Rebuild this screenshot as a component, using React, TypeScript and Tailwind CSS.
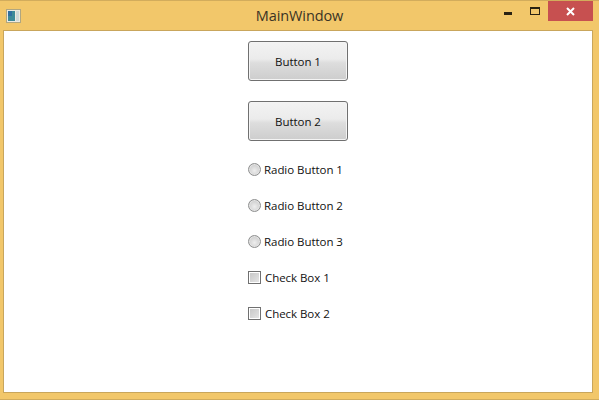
const font = { fontFamily: '"Open Sans", "Noto Sans", sans-serif' };

function Btn({ label }: { label: string }) {
  return (
    <button className="w-[100px] h-[40px] rounded-[3px] border border-[#707070] bg-[linear-gradient(#f3f3f3_0%,#ebebeb_45%,#dddddd_55%,#cdcdcd_100%)] text-[11.5px] tracking-[-0.05px] text-[#111] flex items-center justify-center pt-[2px] shadow-[inset_0_0_0_1px_#f4f4f4]">
      {label}
    </button>
  );
}

function Radio({ label }: { label: string }) {
  return (
    <div className="h-[36px] w-[100px] flex items-center gap-[3px] text-[11.5px] tracking-[-0.05px] text-[#111]">
      <span className="w-[13px] h-[13px] rounded-full border border-[#8e8f8f] bg-[radial-gradient(circle_at_50%_60%,#eeeeee_0%,#d5d5d5_55%,#c4c4c4_100%)] shadow-[inset_0_0_0_1px_#e4e4e4] shrink-0" />
      <span className="pt-[2px]">{label}</span>
    </div>
  );
}

function Check({ label }: { label: string }) {
  return (
    <div className="h-[36px] w-[100px] flex items-center gap-[4px] text-[11.5px] tracking-[-0.05px] text-[#111]">
      <span className="w-[13px] h-[13px] border border-[#707070] bg-white p-[1px] shrink-0 flex">
        <span className="flex-1 bg-[linear-gradient(135deg,#c8c8c8,#e4e4e4)]" />
      </span>
      <span className="pt-[2px]">{label}</span>
    </div>
  );
}

export default function App() {
  return (
    <div style={font} className="w-[599px] h-[400px] bg-[#f2c76a] flex flex-col overflow-hidden border-t border-b border-[#d2ac5c]">
      <div className="h-[29px] grid grid-cols-[1fr_auto_1fr] shrink-0">
        <div className="flex items-center">
          <svg width="16" height="16" viewBox="0 0 16 16" className="ml-[6px]">
            <rect x="0.5" y="1.5" width="14" height="13" fill="#eceae0" stroke="#b0a680" />
            <rect x="2" y="3" width="7" height="10" fill="#3d8a98" />
            <rect x="2" y="3" width="4" height="5" fill="#2f6fa0" />
            <rect x="10" y="3" width="3" height="10" fill="#cfd8d8" />
          </svg>
        </div>
        <div className="flex items-center text-[14.5px] tracking-[-0.1px] text-[#3a3325]">MainWindow</div>
        <div className="flex justify-end items-start h-[20px]">
          <span className="mt-[11px] mr-[18px] w-[8px] h-[3px] bg-[#2a2212]" />
          <span className="mt-[6px] mr-[8px] w-[10px] h-[8px] border border-t-2 border-[#2a2212]" />
          <span className="mr-[6px] w-[45px] h-[20px] bg-[#c75050] flex items-center justify-center">
            <svg width="9" height="9" viewBox="0 0 9 9">
              <path d="M1 1 L8 8 M8 1 L1 8" stroke="#fff" strokeWidth="2" />
            </svg>
          </span>
        </div>
      </div>
      <div className="flex-1 ml-[3px] mr-[6px] mb-[6px] bg-white border border-[#c9a65c] flex flex-col items-center pt-[10px]">
        <div className="flex flex-col items-start w-[100px]">
          <Btn label="Button 1" />
          <div className="h-[20px]" />
          <Btn label="Button 2" />
          <div className="h-[10px]" />
          <Radio label="Radio Button 1" />
          <Radio label="Radio Button 2" />
          <Radio label="Radio Button 3" />
          <Check label="Check Box 1" />
          <Check label="Check Box 2" />
        </div>
      </div>
    </div>
  );
}
